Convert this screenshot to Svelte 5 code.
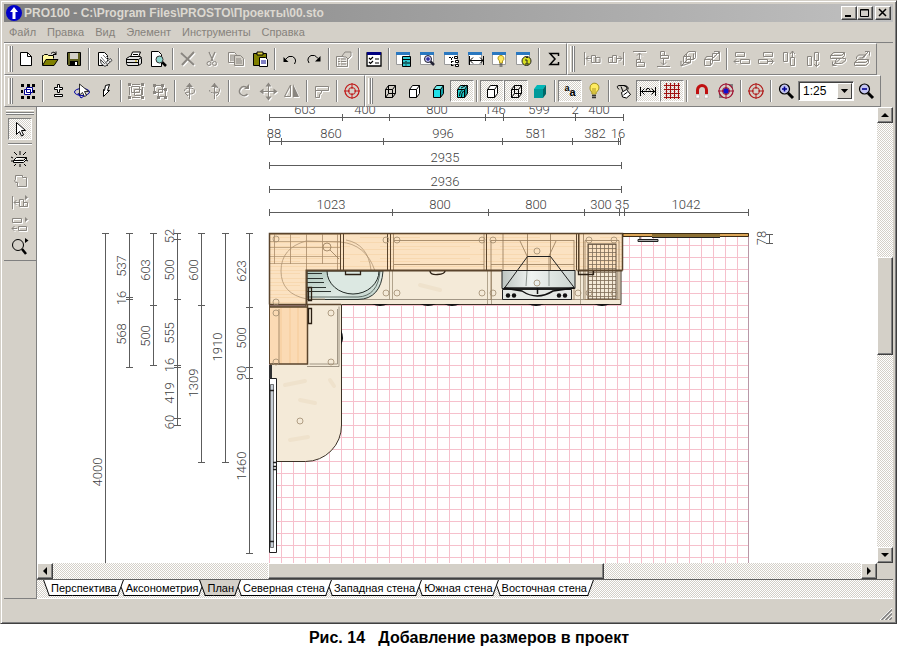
<script>
  const menus = ['Файл', 'Правка', 'Вид', 'Элемент', 'Инструменты', 'Справка'];

  const cubeEdges = 'M5.5 8.5h7v8h-7zM5.5 8.5l3-4h7l-3 4M15.5 4.5v8l-3 4';
  const cube = (front, top, side, extra = '') =>
    `<path d="M5.5 8.5h7v8h-7z" fill="${front}"/><path d="M5.5 8.5l3-4h7l-3 4z" fill="${top}"/><path d="M12.5 8.5l3-4v8l-3 4z" fill="${side}"/><path d="${cubeEdges}${extra}" fill="none" stroke="#000"/>`;
  const win = (extra) =>
    `<path d="M2.500 3.500h13v12h-13z" fill="#fff" stroke="#9a9a9a"/><path d="M2 3h14v3H2z" fill="#2a78c0"/>${extra}`;
  const stroke = (d, fill = 'none') => `<path d="${d}" fill="${fill}" stroke="currentColor"/>`;
  const target = (c) =>
    `<circle cx="10" cy="10" r="7" fill="none" stroke="${c}" stroke-width="1.200"/><circle cx="10" cy="10" r="3.500" fill="none" stroke="${c}"/><path d="M10 2v6M10 12v6M2 10h6M12 10h6" stroke="${c}"/>`;
  const lens = (sign) =>
    `<path d="M12 12l5 5" stroke="#000" stroke-width="3"/><circle cx="8.500" cy="8" r="5" fill="#c4c4f0" stroke="#000" stroke-width="1.200"/><path d="${sign}" stroke="#000090" stroke-width="1.600"/>`;

  const art = {
    new: '<path d="M4.500 3.500h7l4 4v9h-11z" fill="#fff" stroke="#000"/><path d="M11.500 3.500v4h4" fill="none" stroke="#000"/>',
    open: '<path d="M2.500 16v-9.500h1l1-1h3l1 1h5v3" fill="#fff8a0" stroke="#000"/><path d="M2.500 16.500l3.500-6h12l-4 6z" fill="#808000" stroke="#000"/><path d="M11 4.500q3-3 5 1m0-3v3h-3" fill="none" stroke="#000"/>',
    save: '<path d="M3.500 3.500h13v13h-12l-1-1z" fill="#606020" stroke="#000"/><path d="M6 4h8v6H6z" fill="#d4d0c8"/><path d="M6 12h8v5H6z" fill="#000"/><path d="M11 13h2v3h-2z" fill="#fff"/>',
    export: '<path d="M4.500 3.500h6l3 3v10h-9z" fill="#fff" stroke="#000"/><path d="M6.500 10.500l4 4 6-5 1.500 2-7 6-4-3z" fill="#e8e8e8" stroke="#444"/><path d="M9 6l7 7M7 8l6 7M12 7l4 4" stroke="#777"/>',
    print: '<path d="M6.500 8l2-5h8l-2 5z" fill="#fff" stroke="#000"/><path d="M9 5.500h5" stroke="#000"/><path d="M2.500 9.500l3-2h11l1 2v5l-3 2h-11l-1-2z" fill="#e0e0e0" stroke="#000"/><path d="M2.500 10.500h12l3-2M14.500 11v5M3 13.500h11" fill="none" stroke="#000"/><path d="M11 12h2" stroke="#d0b000"/>',
    preview: '<path d="M3.500 2.500h7l3 3v12h-10z" fill="#fff" stroke="#000"/><path d="M14 13l4 4" stroke="#000" stroke-width="2.500"/><circle cx="11.500" cy="10.500" r="3.500" fill="#90d8d0" stroke="#333"/>',
    delete: '<path d="M3 4l13 12M16 3L4 16" stroke="currentColor" stroke-width="2" fill="none"/>',
    cut: '<path d="M7 3l4 9M13 3l-4 9" stroke="currentColor" stroke-width="1.300"/><circle cx="7" cy="14.500" r="2" fill="none" stroke="currentColor"/><circle cx="12.500" cy="14.500" r="2" fill="none" stroke="currentColor"/>',
    copy: stroke('M2.500 3.500h6l2 2v8h-8zM4 7h4M4 9h4M4 11h4') + stroke('M8.500 6.500h6l3 3v7h-9zM10 10h5M10 12h6M10 14h6', '#d4d0c8'),
    paste: '<path d="M3.500 4.500h13v12h-13z" fill="#808000" stroke="#000"/><path d="M7 3h6v3H7z" fill="#e0d040" stroke="#000"/><path d="M9.500 8.500h6l2 2v7h-8z" fill="#fff" stroke="#000"/><path d="M11 12h5M11 14h5" stroke="#008"/>',
    undo: '<path d="M14.500 15q2-3 .5-5.500-2-3-6-2-2 1-3.500 3" fill="none" stroke="#000"/><path d="M3.500 8v5h5z" fill="#000"/>',
    redo: '<path d="M5 14q-2-3-.5-5.500 2-3 6-2 2 1 3.500 3" fill="none" stroke="#000"/><path d="M16.500 7v5.500H11z" fill="#000"/>',
    props: stroke('M2.500 7.500h11v10h-11zM4 10h2M7 10h5M4 12.500h2M7 12.500h5M4 15h2M7 15h5') + stroke('M8 7l3-4h6v4l-3 3-2-2h-2z', '#d4d0c8'),
    check: '<path d="M3 4h14v13H3z" fill="#fff" stroke="#000" stroke-width="1.300"/><path d="M3 3h14v3H3z" fill="#000080"/><path d="M5 9l1.500 1.500L9 8M5 13l1.500 1.500L9 12M11 10h4M11 14h4" fill="none" stroke="#000" stroke-width="1.200"/>',
    winTable: win('<path d="M8.500 7.500h8v10h-8z" fill="#30c8d0" stroke="#000"/><path d="M9 10.500h7M9 14h7M12 12v1M12 15.500v1" stroke="#000"/>'),
    winZoom: win('<path d="M12 12l4 4" stroke="#223" stroke-width="2.500"/><circle cx="10" cy="10" r="3.500" fill="#c4c4f0" stroke="#223"/><path d="M8 10h4M10 8v4" stroke="#008"/>'),
    winTree: win('<path d="M7 8.500h4M9.500 9v8M9.500 12.500h3M9.500 16.500h3" fill="none" stroke="#000" stroke-dasharray="2 1"/><path d="M12.500 7.500h3v2h-3zM13.500 11.500h3v2h-3zM13.500 15.500h3v2h-3z" fill="#fff" stroke="#000"/>'),
    winDim: win('<path d="M3.500 7v9M17.500 7v9M4 11.500h13M7 8.500l-3 3 3 3M14 8.500l3 3-3 3" fill="none" stroke="#000"/>'),
    winBulb: win('<path d="M8 10a3 3 0 1 1 4.500 2v2h-3v-2z" fill="#ffe860" stroke="#b09820"/><path d="M9.500 15h3M9.500 17h3" stroke="#333"/>'),
    winInfo: win('<circle cx="12.500" cy="12" r="4.500" fill="#d8e020" stroke="#222"/><path d="M11 11h2v4M11 15h4M12 8.500h2" fill="none" stroke="#222"/>'),
    sum: '<path d="M14.500 7V4.500H6l5 5.500-5 5.500h8.500V13" fill="none" stroke="#000" stroke-width="1.500"/>',
    alLeft: stroke('M2.500 3v13M4 9.500h5M6.500 7L4 9.500 6.500 12M9.500 6.500h4v7h-4zM14 8.500h4v5h-4z'),
    alRight: stroke('M17.500 3v13M11 9.500h5M13.500 7l2.500 2.500-2.500 2.500M6.500 6.500h4v7h-4zM2.500 8.500h4v5h-4z'),
    alTop: stroke('M3 2.500h13M9.500 4v6M7 6.500L9.500 4 12 6.500M6.500 10.500h4v3h-4zM6.500 13.500h8v4h-8z'),
    alBottom: stroke('M3 17.500h13M9.500 9v7M7 13.500l2.500 2.500 2.500-2.500M6.500 2.500h4v4h-4zM6.500 6.500h8v3h-8z'),
    alBack: stroke('M8.500 4.500l2-2h7v6l-2 2h-7zM5.500 7.500h7v6h-7zM5.500 7.500l3-3M15.500 4.500v6M13 13.500L3 17v-5M3 17l7-7'),
    alFront: stroke('M2.500 10.500h6v6h-6zM2.500 10.500l2-3h6v6l-2 3M10.500 4.500h7v7h-7zM17 3L8 12M12 2.500h5.500V8'),
    spLeft: stroke('M3.500 3.500h9v4h-9zM8.500 10.500h9v4h-9zM7 12.500H2M4.500 10L2 12.500 4.500 15'),
    spRight: stroke('M7.500 3.500h9v4h-9zM2.500 10.500h9v4h-9zM12 12.500h5M15 10l2.500 2.500L15 15'),
    spUp: stroke('M3.500 3.500h4v9h-4zM10.500 8.500h4v8h-4zM12.500 8V2M10 5l2.500-3L15 5'),
    spDown: stroke('M3.500 7.500h4v9h-4zM10.500 3.500h4v8h-4zM12.500 12v5.500M10 15l2.500 2.500L15 15'),
    spNear: stroke('M2.500 6.500l3-3h11l-3 3zM2.500 6.500v3h11l3-3v-3M7.500 11.500l2-2M7.500 11.500v3h6l4-3v-2h-3M13 9L5 16M4.500 12.500v4h4'),
    spFar: stroke('M2.500 13.500l3-3h11l-3 3zM2.500 13.500v3h11l3-3v-3M4.500 10v-2l2-2h7l-2 3h-4M10 9l7-7M13 2.500h4.500v4'),
    selectAll: '<path d="M3 3h3v3H3zM9 3h3v3H9zM14 3h3v3h-3zM3 9h2v3H3zM15 9h2v3h-2zM3 15h3v3H3zM9 15h3v3H9zM14 15h3v3h-3z" fill="#000"/><path d="M6.500 8.500h6v5h-6zM8.500 6.500h6v5h-6z" fill="#fff" stroke="#000090"/>',
    plusminus: '<path d="M9.500 3.500h2v3h3v2h-3v3h-2v-3h-3v-2h3zM6.500 13.500h8v2h-8z" fill="#fff" stroke="#000"/>',
    spin: '<ellipse cx="10" cy="11" rx="7.500" ry="3.500" fill="none" stroke="#0000a0"/><path d="M7.500 3v11l3-2.500 2 4 2-1-2-4h4z" fill="#fff" stroke="#000" stroke-width=".8"/><path d="M6 12l3 5 3-2" fill="none" stroke="#0000a0"/>',
    bolt: '<path d="M9.500 4.500l4-1-2 6 2 0-6 6v-7l1 1z" fill="#fff" stroke="#000" stroke-linejoin="round"/>',
    group: stroke('M5.500 5.500h8v6h-8zM8.500 8.500h7v6h-7z') + '<path d="M2 2h3v3H2zM15 2h3v3h-3zM2 15h3v3H2zM15 15h3v3h-3zM6 3h8v1H6zM3 6h1v8H3zM16 6h1v8h-1zM6 16h8v1H6z" fill="currentColor"/>',
    ungroup: stroke('M4.500 4.500h8v7h-8zM8.500 8.500h7v7h-7z') + '<path d="M3 3h3v3H3zM11 3h3v3h-3zM3 10h3v3H3zM7 15h3v3H7zM14 7h3v3h-3zM14 15h3v3h-3z" fill="currentColor"/>',
    turnA: stroke('M9.500 2v16M4.500 10q0-3 5-3t5 3-5 3M8 15l-3-3 4-1') + '<path d="M6 6l3.500-4L13 6z" fill="currentColor"/>',
    turnB: stroke('M10.500 2v16M5.500 9q0 3 5 3t5-3-5-3M12 15l3-3-4-1') + '<path d="M7 6l3.500-4L14 6z" fill="currentColor"/>',
    rotate: '<path d="M12 6a4.500 4.500 0 1 0 1.500 7" fill="none" stroke="currentColor" stroke-width="1.500"/><path d="M10 8h5V3z" fill="currentColor"/>',
    move: stroke('M10.500 4v13M4 10.500h13') + '<path d="M7.500 5.500l3-4 3 4zM7.500 15.500l3 4 3-4zM5.500 7.500l-4 3 4 3zM15.500 7.500l4 3-4 3z" fill="currentColor"/>',
    mirror: stroke('M8.500 4v11.500h-6z') + '<path d="M11 3v13h6z" fill="currentColor"/>',
    corner: stroke('M3.500 5.500h13v4h-7v2l-2 2v3h-4zM3.500 9.500h6'),
    target: target('#c01818'),
    targetRed: target('#b01818'),
    cubeWire: cube('none', 'none', 'none', 'M8.500 4.500v8h7M8.500 12.500l-3 4'),
    cubeWhite: cube('#fff', '#fff', '#fff'),
    cubeCyan: cube('#20e0e8', '#70f0f0', '#10a0a8'),
    cubeTex: cube('#20d0d0', '#60e0e0', '#108888', 'M7.500 15q0-5 3-6M9.500 16q0-4 2-6M9 7l4-2'),
    cubeTeal: '<path d="M4 8h9v9H4z" fill="#009a9a"/><path d="M4 8l3-4h9l-3 4z" fill="#00b8b8"/><path d="M13 8l3-4v9l-3 4z" fill="#006868"/>',
    bulb: '<path d="M6 7a4.500 4.500 0 1 1 7.500 3q-1.500 1-1.500 3H8q0-2-1-3t-1-3z" fill="#ffec60" stroke="#a09020"/><path d="M9 7v5M11 7v5" stroke="#b09820"/><path d="M8 14.500h4M8 16.500h4" stroke="#333" stroke-width="1.500"/>',
    paint: '<path d="M5 8.500Q1 4.500 6 4.500h4q4 1 3 4M9 4.500q6 0 5 4M7 5.500l2 5" fill="none" stroke="#000"/><path d="M7.500 11.500l5-3 4 5-4 3.500-4-1z" fill="#fff" stroke="#000"/><path d="M9.500 14l4-3" stroke="#000"/>',
    dim: '<path d="M2.500 6v9M17.500 6v9M3 10.500h14M6.500 7.500l-3 3 3 3M13.500 7.500l3 3-3 3M8 9.500l1-2h2l1 2" fill="none" stroke="#000"/>',
    grid: '<path d="M2 4.500h16M2 8.500h16M2 12.500h16M2 16.500h16M4.500 2v16M8.500 2v16M12.500 2v16M16.500 2v16" stroke="#a01010" stroke-width="1.200"/>',
    magnet: '<path d="M5.500 13V9a4.500 4.500 0 0 1 9 0v4" fill="none" stroke="#c01010" stroke-width="3"/><path d="M4 14h3.500v3H4zM12.500 14H16v3h-3.500z" fill="#fff" stroke="#aaa" stroke-width=".5"/>',
    globe: '<path d="M12 3h5v5zM3 12v5h5z" fill="#808080"/><circle cx="10" cy="10" r="3" fill="#1010d0"/>' + target('#a01030'),
    zoomIn: lens('M6 8h5M8.500 5.500v5'),
    zoomOut: lens('M6 8h5'),
    pointer: '<path d="M6.500 3.500v12l3-3 2 4.500 2-1-2-4.500h4z" fill="#fff" stroke="#000"/>',
    board: '<path d="M3.500 11.500l3-3h10l-3 3zM3.500 11.500v2h10l3-3v-2" fill="#fff" stroke="#000"/><path d="M4 3l3 3M10 2v4M16 3l-3 3M1 8l2 1M1 12h2M4 17l2-2M10 18v-3M16 17l-2-2M18 12l-2-1" stroke="#000"/>',
    shape: stroke('M5.500 4.500h7v2h4v9h-9v-4h-2l-1-2 1-1z'),
    flyAlign: stroke('M2.500 3v13M4 9.500h5M6.500 7L4 9.500 6.500 12M9.500 6.500h4v7h-4zM13.500 9.500h4v4h-4z') + '<path d="M15 2l3 2.500-3 2.500z" fill="currentColor"/>',
    flySpace: stroke('M2.500 3.500h9v4h-9zM8.500 11.500h8v4h-8zM7 13.500H2M4.500 11L2 13.500 4.500 16') + '<path d="M15 2l3 2.500-3 2.500z" fill="currentColor"/>',
    flyZoom: '<circle cx="8" cy="8" r="5.500" fill="none" stroke="#000"/><path d="M12 12l4 5" stroke="#000" stroke-width="2.500"/><path d="M15 1l3.500 2.500L15 6z" fill="#000"/>',
  };

  // "-" separates groups, "!" marks an unavailable command, "*" a latched one
  const band = (list) =>
    list.split(' ').map((s) => ({ name: s.replace(/[!*]/, ''), off: s.startsWith('!'), on: s.startsWith('*') }));
  const fileBar = band('new open save - export - print preview - !delete !cut !copy paste - undo redo - !props - check - winTable winZoom winTree winDim winBulb winInfo - sum');
  const alignBar = band('!alLeft !alRight !alTop !alBottom !alBack !alFront - !spLeft !spRight !spUp !spDown !spNear !spFar');
  const editBar = band('selectAll - plusminus spin bolt - !group !ungroup - !turnA !turnB - !rotate !move !mirror - !corner - target');
  const viewBar = band('cubeWire cubeWhite cubeCyan *cubeTex - *cubeWhite *cubeWire cubeTeal - *aa bulb - paint *dim *grid - magnet globe - targetRed - zoomIn scale zoomOut');
  const sideBar = band('*pointer - board !shape !flyAlign !flySpace flyZoom');

  const tabs = ['Перспектива', 'Аксонометрия', 'План', 'Северная стена', 'Западная стена', 'Южная стена', 'Восточная стена'];
  let activeTab = $state('План');

  // Dimension chains: position of the line, its ticks, and [label, centre] pairs
  const across = [
    { at: 117, ticks: [269, 342, 389, 485, 503, 575, 623], labels: [['603', 305], ['400', 365], ['800', 437], ['146', 495], ['599', 539], ['2', 575], ['400', 599]] },
    { at: 141, ticks: [269, 281, 383, 502, 572, 618, 620], labels: [['88', 274], ['860', 331], ['996', 443], ['581', 536], ['382', 595], ['16', 618]] },
    { at: 165, ticks: [269, 621], labels: [['2935', 445]] },
    { at: 189, ticks: [269, 621], labels: [['2936', 445]] },
    { at: 212, ticks: [269, 392, 488, 584, 619, 624, 748], labels: [['1023', 331], ['800', 440], ['800', 536], ['300', 601], ['35', 622], ['1042', 686]] },
  ];
  const down = [
    { at: 105, ticks: [233, 1600], labels: [['4000', 472]] },
    { at: 129, ticks: [233, 297, 299, 367], labels: [['537', 266], ['16', 298], ['568', 334]] },
    { at: 153, ticks: [233, 305, 365], labels: [['603', 270], ['500', 336]] },
    { at: 177, ticks: [233, 239, 299, 365, 367, 418, 425], labels: [['52', 236], ['500', 270], ['555', 333], ['16', 365], ['419', 393], ['60', 422]] },
    { at: 201, ticks: [233, 305, 462], labels: [['600', 270], ['1309', 383]] },
    { at: 225, ticks: [233, 462], labels: [['1910', 347]] },
    { at: 249, ticks: [233, 307, 367, 378, 553], labels: [['623', 271], ['500', 338], ['90', 373], ['1460', 466]] },
    { at: 769, ticks: [234, 243], labels: [['78', 238]] },
  ];

  const feet = [
    [276, 239], [276, 302], [276, 313], [276, 362], [331, 313], [331, 362], [386, 240], [397, 240],
    [386, 293], [397, 293], [482, 240], [482, 293], [493, 240], [493, 293], [537, 251], [537, 283],
    [578, 293], [589, 240], [614, 240], [589, 293], [614, 293], [300, 421],
  ];
  const pulls = [372, 420, 444, 528, 594];
</script>

{#snippet tools(items)}
  {#each items as t}
    {#if t.name === '-'}
      <span class="sep"></span>
    {:else if t.name === 'scale'}
      <span class="combo">
        <select aria-label="Масштаб"><option>1:25</option><option>1:50</option></select>
        <svg viewBox="0 0 15 17" aria-hidden="true"><path d="M3 6h9l-4.500 5z" /></svg>
      </span>
    {:else}
      <button class="tool" class:on={t.on} disabled={t.off} aria-label={t.name}>
        {#if t.name === 'aa'}
          <span class="aa"><sup>a</sup>a</span>
        {:else}
          <svg viewBox="0 0 20 20" aria-hidden="true">{@html art[t.name]}</svg>
        {/if}
      </button>
    {/if}
  {/each}
{/snippet}

<div class="page">
  <main class="window">
    <header class="title">
      <svg class="logo" viewBox="0 0 16 16" aria-hidden="true">
        <circle cx="8" cy="8" r="8" fill="#0000c8" />
        <path d="M8 2l4 5H9.500v7h-3V7H4z" fill="#fff" />
      </svg>
      <h1>PRO100 - C:\Program Files\PROSTO\Проекты\00.sto</h1>
      <button class="cap" aria-label="Свернуть"><svg viewBox="0 0 12 10"><path d="M2 8h6" /></svg></button>
      <button class="cap" aria-label="Развернуть"><svg viewBox="0 0 12 10"><path d="M1.500 1.500h8v7h-8zM1.500 2h8" stroke-width="1" /></svg></button>
      <button class="cap close" aria-label="Закрыть"><svg viewBox="0 0 12 10"><path d="M2 1l7 7M9 1L2 8" stroke-width="1.500" /></svg></button>
    </header>

    <nav class="menu">
      {#each menus as m}<button>{m}</button>{/each}
    </nav>

    <div class="bars">
      <div class="band"><i class="grip"></i>{@render tools(fileBar)}</div>
      <div class="band second"><i class="grip"></i>{@render tools(alignBar)}</div>
    </div>
    <div class="bars">
      <div class="band wide"><i class="grip"></i>{@render tools(editBar)}</div>
      <div class="band second"><i class="grip"></i>{@render tools(viewBar)}</div>
    </div>

    <div class="body">
      <aside>
        <div class="sidebar"><i class="grip"></i>{@render tools(sideBar)}</div>
      </aside>

      <section class="work">
        <div class="view">
          <svg class="plan" role="img" aria-label="План кухни">
            <defs>
              <pattern id="cells" x="269" y="233" width="12" height="12" patternUnits="userSpaceOnUse">
                <path d="M.5 0v12M0 .5h12" stroke="#f6c0cc" fill="none" />
              </pattern>
              <pattern id="wood" width="120" height="12" patternUnits="userSpaceOnUse">
                <path d="M0 0h120v12H0z" fill="#fbe2c2" />
                <path d="M0 2.500h120M20 6.500h90M0 9.500h60" stroke="#f7d8b0" />
              </pattern>
              <pattern id="mesh" x="588" y="244" width="4" height="4" patternUnits="userSpaceOnUse">
                <path d="M.5 0v4M0 .5h4" stroke="#7e6c58" stroke-width=".8" />
              </pattern>
              <linearGradient id="steel" x2="1" y2="1">
                <stop offset="0" stop-color="#b0c8be" /><stop offset=".6" stop-color="#dfeae4" /><stop offset="1" stop-color="#b4c8c0" />
              </linearGradient>
              <linearGradient id="hood" x2="1">
                <stop offset="0" stop-color="#bcc4c0" /><stop offset=".4" stop-color="#f0f4f2" /><stop offset="1" stop-color="#ccd4d0" />
              </linearGradient>
            </defs>
            <g transform="translate(-37 -107)">
              <rect x="269" y="233" width="480" height="1400" fill="url(#cells)" />
              <path d="M748.500 233v1400" stroke="#b898a8" />

              <!-- worktops -->
              <path d="M270 365V306h36v-36h315v34.500H341.500V425a36 36 0 0 1-36 36.500H270z" fill="#f4ead8" stroke="#3c3226" />
              <path d="M285 385l20-4M300 400l15 3M290 440l18-3M420 285l20 5M330 380l4 6" stroke="#efe2cc" stroke-width="4" stroke-linecap="round" />
              <path d="M307 299.500h313M307 366.500h32v-60M337.500 309v55h-28" fill="none" stroke="#8c8070" stroke-width=".8" />
              <path d="M392.500 271v29M389.500 271v29M487.500 271v33M491.500 271v33M583.500 271v29M580.500 271v33M617.500 271v29" stroke="#a09078" stroke-width=".8" />

              <!-- sink -->
              <path d="M307 271h76q-2 28-25 28.500h-51z" fill="url(#steel)" stroke="#2c3430" />
              <path d="M380 271q-2 25-22 26h-51" fill="none" stroke="#5c6a64" />
              <path d="M327 271a26 23 0 0 0 52 0z" fill="#dce8e2" stroke="#202824" />
              <path d="M307 273.500h15M307 278.500h16M307 282.500h17M307 287.500h19M307 291.500h24" stroke="#2c3430" />

              <!-- wall cabinets -->
              <path d="M269.500 233.500h353v37h-316v34h-37z" fill="url(#wood)" />
              <path d="M270 307h37v57h-37z" fill="#fbdab4" />
              <path d="M281 307v57M290 307v57M298 307v57" stroke="#f8d2a6" stroke-width="2" />
              <g fill="none" stroke="#967a58" stroke-width=".8">
                <path d="M270 234.500h70M270 241.500h70M270 247.500h70M270 256.500h70M270 263.500h70" stroke="#b89a76" />
                <path d="M274.500 234v30M290.500 234v30M306.500 234v37M322.500 234v30M337.500 234v36" stroke="#a88a68" />
                <path d="M325 299H307q-26-5-26-28t25-30l34 1q26 2 35 29M346 240q22 4 25 30" stroke="#b09474" />
                <circle cx="327" cy="247" r="4" /><path d="M330 250l9 9" />
                <path d="M393.500 234v36M484 240.500h-90M484 264.500h-90M484 234v36M491 240.500h83M491 264.500h83M491 240v60M574 240v60M503 234v36M527.500 234v36M550.500 234v36M520 241l7 15v29M556 241l-7 15v29M279 309v55" />
                <path d="M585 240.500h34v59h-34zM583.500 234v36M579.500 234v36" />
              </g>
              <rect x="588" y="244" width="28" height="55" fill="url(#mesh)" stroke="#5c4a38" />
              <g fill="none" stroke="#5a442c">
                <path d="M269.500 304.500v-71h353v37" stroke-width="1.500" />
                <path d="M622.500 270.500h-45M502 270.500H306.500v34" stroke-width="2" />
                <path d="M340.500 234v36M343.500 234v36M387.500 234v36M390.500 234v36M486.500 234v36M576.500 234v36M578.500 234v36" />
                <path d="M269 304.500h72M269 307h38M270 364h37.500V305" stroke-width="1.500" />
                <path d="M269.500 304v60" />
              </g>

              <!-- hood and hob -->
              <path d="M502 270.500h73v18h-73z" fill="url(#hood)" stroke="#202020" />
              <path d="M527.500 256.500h23l24 31.500h-70zM504 288h70" fill="none" stroke="#202020" />
              <path d="M502.500 289.500h69v10h-69z" fill="#e4e8e4" stroke="#202020" />
              <path d="M504 288l18 3q15 10 31 0l21-3M537.500 288v6" fill="none" stroke="#101010" stroke-width="1.500" />
              <path d="M527 271l-1 15M549 271v15" stroke="#8c9490" />
              {#each [508, 514, 559, 565] as cx}<circle {cx} cy="295.500" r="2.200" fill="#101010" />{/each}

              {#each feet as [cx, cy]}<circle {cx} {cy} r="3" fill="none" stroke="#a08c70" stroke-width=".8" />{/each}
              {#each pulls as x}<path d="M{x} 304h16q-8 4-16 0z" fill="#101010" />{/each}
              <path d="M341 330v15q4-7 0-15z" fill="#101010" />
              <path d="M345.500 271v3.500h15V271M430 271q0 4 7.500 3.500t7.500-3.500M578.500 271v3.500h15V271M308.500 287.500h3v13h-3zM308.500 308.500h3v15h-3z" fill="none" stroke="#2c2014" stroke-width="1.300" />

              <!-- shelf -->
              <path d="M623 233.500h125.500v3H623z" fill="#dca658" stroke="#3c2c14" />
              <path d="M652 234h68v3h-68z" fill="#8c7034" />
              <path d="M652 237.500h68M640 237v3M638 239.500h20v2h-20z" stroke="#202020" fill="#a8a8a8" />

              <!-- window -->
              <path d="M269 365h3v13h-3z" fill="#303030" />
              <path d="M269.500 378.500h7v174h-7z" fill="#fff" stroke="#202020" />
              <path d="M270.500 384.500h3v163h-3z" fill="#c8d0d8" stroke="#404040" stroke-width=".7" />
              <path d="M270 390.500h4M270 541.500h4M273 462.500h4M273 466.500h4M273 469.500h4" stroke="#202020" stroke-width="1.500" />

              <g class="dims">
                {#each across as c}
                  <path d="M{c.ticks[0]} {c.at + 0.5}H{c.ticks.at(-1)}" />
                  {#each c.ticks as t}<path d="M{t + 0.5} {c.at - 3}v7" />{/each}
                  {#each c.labels as [s, x]}<text {x} y={c.at - 3}>{s}</text>{/each}
                {/each}
                {#each down as c}
                  <path d="M{c.at + 0.5} {c.ticks[0]}V{c.ticks.at(-1)}" />
                  {#each c.ticks as t}<path d="M{c.at - 3} {t + 0.5}h7" />{/each}
                  {#each c.labels as [s, y]}<text transform="translate({c.at - 3} {y}) rotate(-90)">{s}</text>{/each}
                {/each}
              </g>
            </g>
          </svg>

          <div class="scroll vertical">
            <button aria-label="Вверх"><svg viewBox="0 0 12 12"><path d="M2 8h8L6 4z" /></svg></button>
            <span style:flex-grow="135"></span>
            <b style:flex-grow="96"></b>
            <span style:flex-grow="193"></span>
            <button aria-label="Вниз"><svg viewBox="0 0 12 12"><path d="M2 4h8L6 8z" /></svg></button>
          </div>
        </div>

        <div class="scroll horizontal">
          <button aria-label="Влево"><svg viewBox="0 0 12 12"><path d="M8 2v8L4 6z" /></svg></button>
          <span style:flex-grow="215"></span>
          <b style:flex-grow="335"></b>
          <span style:flex-grow="257"></span>
          <button aria-label="Вправо"><svg viewBox="0 0 12 12"><path d="M4 2v8l4-4z" /></svg></button>
          <i></i>
        </div>

        <div class="tabs" role="tablist">
          {#each tabs as name, i}
            <button
              role="tab"
              aria-selected={activeTab === name}
              style:z-index={activeTab === name ? 20 : 10 - i}
              onclick={() => (activeTab = name)}>{name}</button>
          {/each}
        </div>
      </section>
    </div>

    <footer>
      <svg viewBox="0 0 12 12" aria-hidden="true">
        <path d="M0 12L12 0M4 12l8-8M8 12l4-4" stroke="#fff" />
        <path d="M1.500 12L12 1.500M5.500 12L12 5.500M9.500 12L12 9.500" stroke="#808080" stroke-width="1.500" />
      </svg>
    </footer>
  </main>

  <p class="caption">Рис. 14 &nbsp; Добавление размеров в проект</p>
</div>

<style>
  :global(body) {
    margin: 0;
    background: #fff;
  }
  .page {
    --face: #d4d0c8;
    --dither: repeating-conic-gradient(#fff 0 25%, #d4d0c8 0 50%) 0 0 / 2px 2px;
    display: flex;
    flex-direction: column;
    height: 100vh;
    font: 11px/16px 'Liberation Sans', sans-serif;
    color: #000;
  }
  .page * {
    box-sizing: border-box;
  }
  button {
    font: inherit;
    color: inherit;
    padding: 0;
    border: 0;
    background: none;
  }
  .window {
    flex: 1;
    min-height: 0;
    display: flex;
    flex-direction: column;
    background: var(--face);
    border: 1px solid;
    border-color: #d4d0c8 #404040 #404040 #d4d0c8;
    box-shadow: inset 1px 1px #fff, inset -1px -1px #808080;
    padding: 3px;
    padding-bottom: 1px;
  }

  .title {
    display: flex;
    align-items: center;
    height: 18px;
    padding: 0 2px;
    background: linear-gradient(90deg, #808080, #c0c0c0);
  }
  .logo {
    width: 16px;
    height: 16px;
    margin-right: 2px;
  }
  h1 {
    flex: 1;
    margin: 0;
    font-size: 12px;
    line-height: 18px;
    font-weight: 700;
    color: #dcd8d0;
    white-space: nowrap;
  }
  .cap,
  .scroll button,
  .scroll b {
    background: var(--face);
    border: 1px solid;
    border-color: #fff #404040 #404040 #fff;
    box-shadow: inset -1px -1px #808080;
  }
  .cap {
    width: 16px;
    height: 14px;
    display: flex;
  }
  .cap svg {
    width: 12px;
    height: 10px;
    margin: 1px;
    fill: none;
    stroke: #000;
    stroke-width: 2;
  }
  .close {
    margin-left: 2px;
  }

  .menu {
    display: flex;
    gap: 11px;
    height: 21px;
    padding: 0 5px;
    color: #86827c;
    border-bottom: 1px solid #808080;
  }

  .bars {
    display: flex;
    height: 32px;
  }
  .band {
    display: flex;
    align-items: center;
    padding-left: 3px;
    border: 1px solid;
    border-color: #fff #808080 #808080 #fff;
  }
  .band.second {
    padding: 0 2px;
  }
  .grip {
    --stripes: #fff 0 1px, #d4d0c8 1px 2px, #808080 2px 3px, #fff 3px 4px, #808080 4px;
    width: 5px;
    height: 26px;
    margin-right: 1px;
    background: linear-gradient(90deg, var(--stripes));
  }
  .wide .grip {
    margin-right: 3px;
  }
  .second .grip {
    margin-right: 5px;
  }
  .tool {
    flex: none;
    display: flex;
    align-items: center;
    justify-content: center;
    width: 24px;
    height: 22px;
  }
  .tool svg {
    flex: none;
    width: 20px;
    height: 20px;
  }
  .tool:disabled {
    color: #8a8680;
  }
  .tool:disabled svg {
    filter: drop-shadow(1px 1px 0 #fff);
  }
  .tool.on {
    background: var(--dither);
    border: 1px solid;
    border-color: #808080 #fff #fff #808080;
  }
  .sep {
    width: 2px;
    height: 22px;
    margin: 0 2px;
    border-left: 1px solid #808080;
    border-right: 1px solid #fff;
  }
  .aa {
    font-weight: 700;
    font-size: 11px;
    line-height: 12px;
  }
  .aa sup {
    font-size: 9px;
    line-height: 8px;
  }
  .combo {
    position: relative;
    width: 56px;
    height: 20px;
    background: #fff;
    border: 1px solid;
    border-color: #808080 #fff #fff #808080;
    box-shadow: inset 1px 1px #404040;
  }
  .combo select {
    appearance: none;
    width: 100%;
    height: 100%;
    padding: 0 4px;
    border: 0;
    background: none;
    font: 12px/16px 'Liberation Sans', sans-serif;
    color: #000;
  }
  .combo svg {
    position: absolute;
    right: 1px;
    top: 1px;
    width: 15px;
    height: 16px;
    background: var(--face);
    border: 1px solid;
    border-color: #fff #404040 #404040 #fff;
    pointer-events: none;
  }

  .body {
    flex: 1;
    min-height: 0;
    display: flex;
  }
  aside {
    width: 33px;
    border-right: 1px solid #808080;
    border-bottom: 1px solid #808080;
  }
  .sidebar {
    display: flex;
    flex-direction: column;
    align-items: center;
    padding: 3px 0 2px;
    border-bottom: 1px solid #808080;
  }
  .sidebar .grip {
    width: 28px;
    height: 5px;
    margin: 0 0 3px;
    background: linear-gradient(var(--stripes));
  }
  .sidebar .sep {
    width: 24px;
    height: 2px;
    margin: 3px 0;
    border: 0;
    border-top: 1px solid #808080;
    border-bottom: 1px solid #fff;
  }

  .work {
    flex: 1;
    min-width: 0;
    display: flex;
    flex-direction: column;
  }
  .view {
    flex: 1;
    min-height: 0;
    display: flex;
    background: #fff;
  }
  .plan {
    flex: 1;
    min-width: 0;
    height: 100%;
    overflow: hidden;
  }
  .dims path {
    stroke: #5c5c5c;
  }
  .dims text {
    font: 300 13px Roboto, 'Liberation Sans', sans-serif;
    fill: #404040;
    text-anchor: middle;
  }

  .scroll {
    display: flex;
    background: var(--dither);
  }
  .scroll button {
    flex: none;
    width: 16px;
    height: 16px;
    display: flex;
  }
  .scroll svg {
    width: 12px;
    height: 12px;
    margin: 1px;
  }
  .scroll span,
  .scroll b {
    flex-basis: 0;
  }
  .vertical {
    flex-direction: column;
    width: 16px;
  }
  .horizontal i {
    width: 16px;
    background: var(--face);
  }

  .tabs {
    display: flex;
    height: 20px;
    padding-left: 9px;
    background: var(--dither);
    border-top: 1px solid #606060;
    border-bottom: 1px solid #fff;
  }
  .tabs button {
    position: relative;
    height: 16px;
    padding: 0 4px 0 5px;
    line-height: 16px;
    white-space: nowrap;
    --tab: #fff;
  }
  .tabs button[aria-selected='true'] {
    --tab: #d4d0c8;
  }
  .tabs button::before,
  .tabs button::after {
    content: '';
    position: absolute;
    z-index: -1;
    top: 0;
    bottom: 0;
    width: 60%;
    background: var(--tab);
    border-bottom: 1px solid #000;
  }
  .tabs button::before {
    left: 0;
    border-left: 1px solid #000;
    transform: skewX(20deg);
  }
  .tabs button::after {
    right: 0;
    border-right: 1px solid #000;
    transform: skewX(-20deg);
  }

  footer {
    display: flex;
    justify-content: flex-end;
    align-items: flex-end;
    height: 23px;
    padding: 0 1px 2px;
  }
  footer svg {
    width: 12px;
    height: 12px;
  }
  .caption {
    margin: 0;
    padding-left: 41px;
    height: 27px;
    font: 700 16px/28px 'Liberation Sans', sans-serif;
    text-align: center;
  }
</style>
